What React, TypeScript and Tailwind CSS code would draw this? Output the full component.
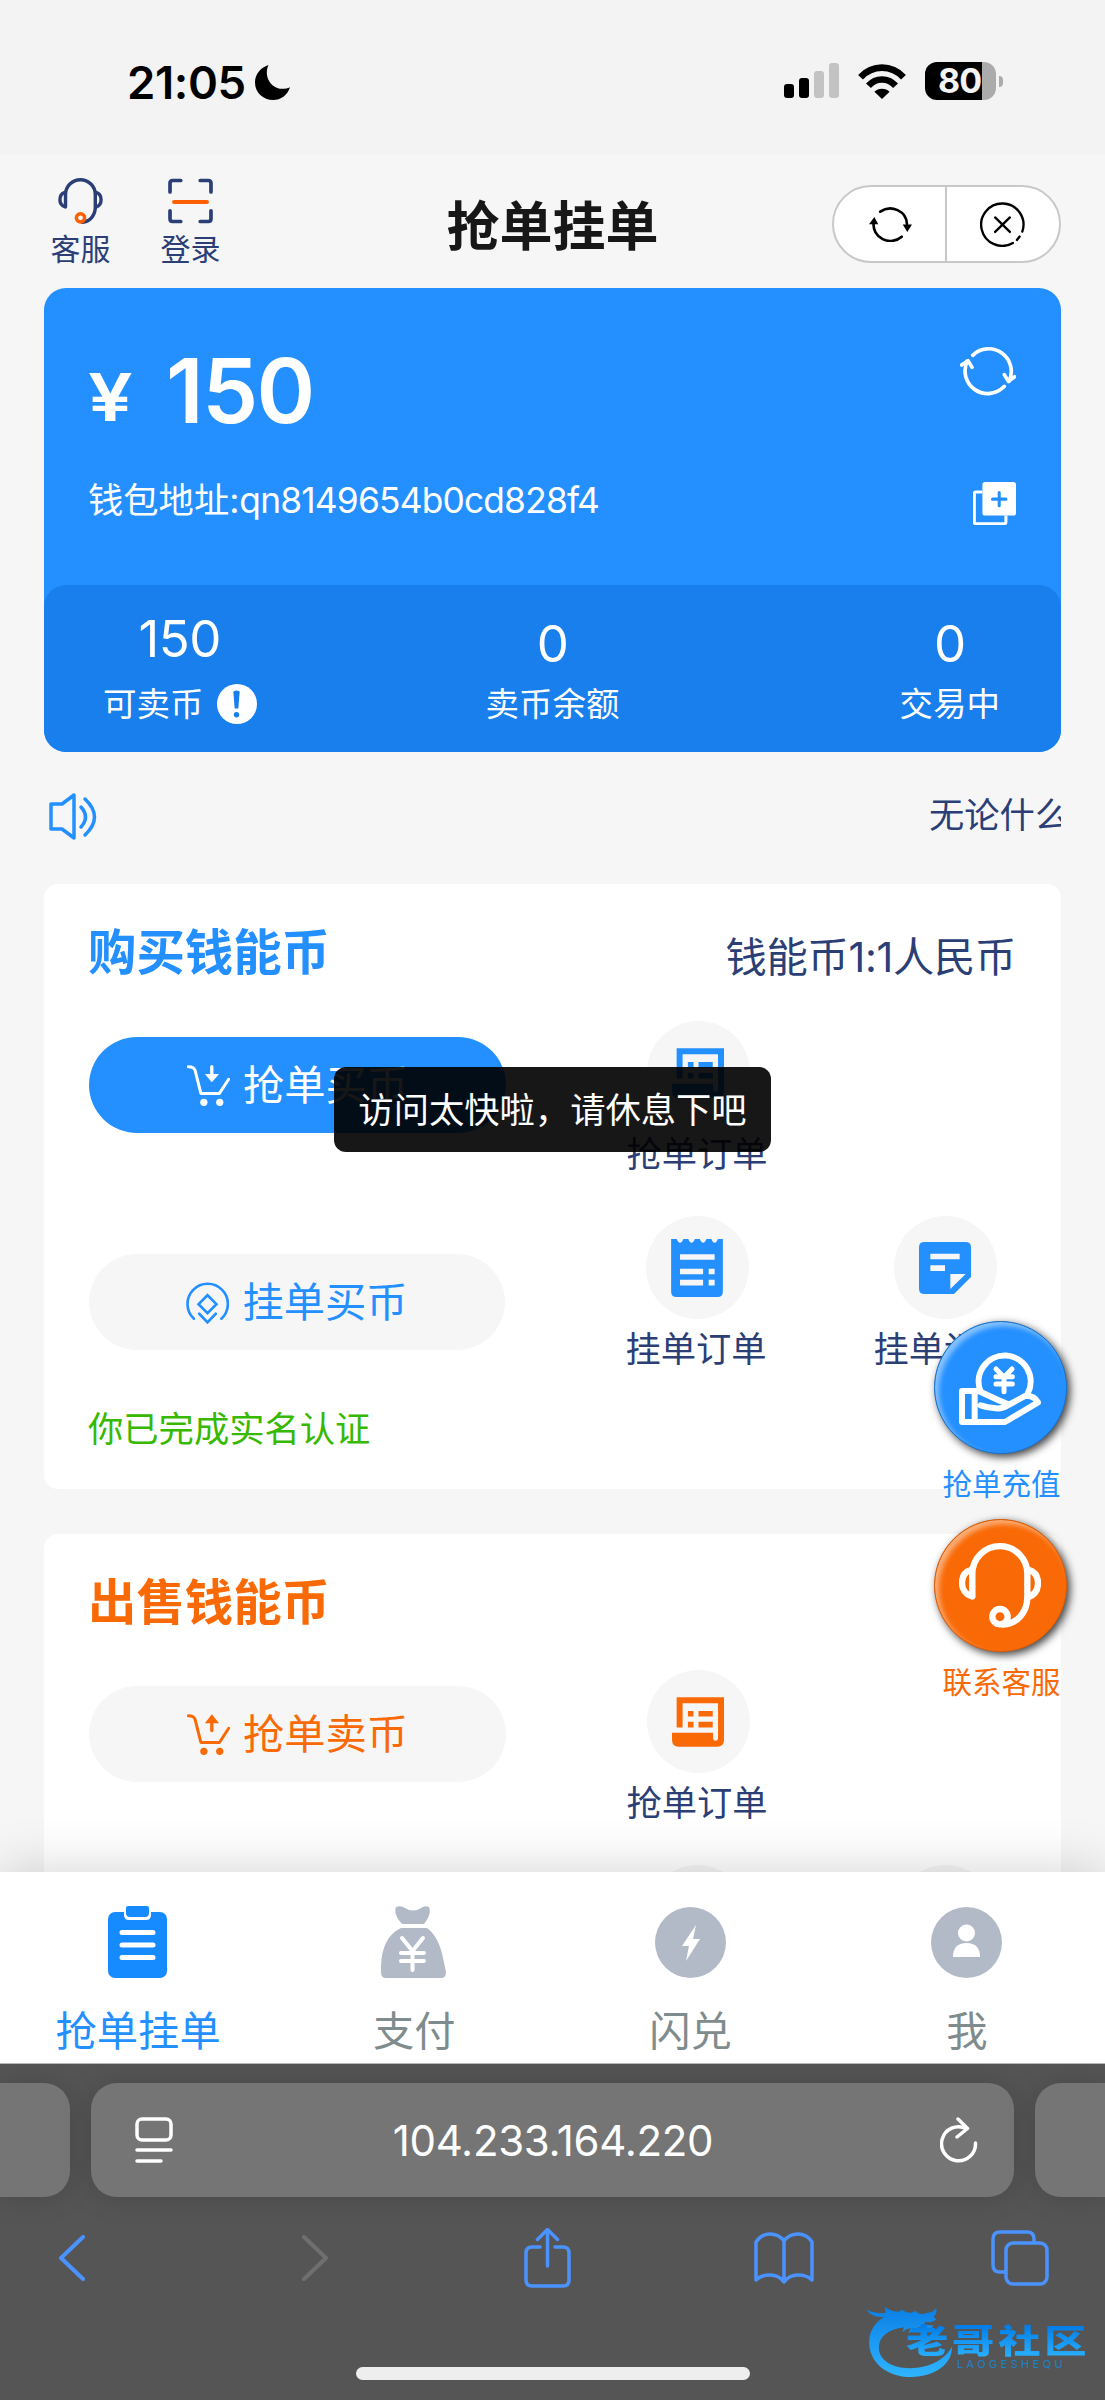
import type { FC, ReactNode } from "react";
import clsx from "clsx";

type IconProps = { className?: string };

const HeadsetIcon: FC<IconProps & { micClassName?: string }> = ({ className, micClassName }) => (
  <svg viewBox="0 0 246 255" fill="none" stroke="currentColor" strokeWidth={19} strokeLinecap="round" className={className}>
    <path d="M40 160V92a82 82 0 0 1 165 0v70c0 45-30 80-72 83" />
    <path d="M36 80C16 86 9 102 9 120s10 34 30 40" />
    <path d="M209 80c20 6 28 22 28 40s-8 34-28 42" />
    <circle cx={123} cy={221} r={23} className={micClassName} />
  </svg>
);

const ScanIcon: FC<IconProps> = ({ className }) => (
  <svg viewBox="0 0 134 134" fill="none" stroke="currentColor" strokeWidth={11} strokeLinecap="round" className={className}>
    <path d="M6 40V14q0-8 8-8h24M96 6h24q8 0 8 8v26M128 96v24q0 8-8 8H96M38 128H14q-8 0-8-8V96" />
    <path d="M18 70h98" stroke="#ff5f00" strokeWidth={12} />
  </svg>
);

const ReloadIcon: FC<IconProps> = ({ className }) => (
  <svg viewBox="0 0 130 106" fill="none" stroke="currentColor" strokeWidth={8} strokeLinecap="round" className={className}>
    <path d="M34 14A51 49 0 0 1 115 52M99 90A51 49 0 0 1 14 48" />
    <path d="M0 52 16 30 28 52ZM102 53 116 76 130 53Z" fill="currentColor" stroke="none" />
  </svg>
);

const CloseIcon: FC<IconProps> = ({ className }) => (
  <svg viewBox="0 0 134 134" fill="none" stroke="currentColor" strokeWidth={7} strokeLinecap="round" className={className}>
    <path d="M126 88A63 63 0 1 0 98 122M110 113l8-10" />
    <path d="m45 46 44 43M89 46 45 89" />
  </svg>
);

const RefreshIcon: FC<IconProps> = ({ className }) => (
  <svg viewBox="0 0 168 148" fill="none" stroke="currentColor" strokeWidth={11} strokeLinecap="round" strokeLinejoin="round" className={className}>
    <path d="M38 27A68 68 0 0 1 147 105M133 120A68 68 0 0 1 22 44" />
    <path d="M5 56 24 43l12 20M133 85l12 20 19-14" />
  </svg>
);

const CopyPlusIcon: FC<IconProps> = ({ className }) => (
  <svg viewBox="0 0 128 128" fill="none" className={className}>
    <path d="M28 30H8q-4 0-4 4v86q0 4 4 4h86q4 0 4-4v-20" stroke="white" strokeWidth={9} />
    <rect x={28} width={100} height={100} rx={8} fill="white" />
    <path d="M78 31v40M58 51h40" stroke="#2490ff" strokeWidth={9} strokeLinecap="round" />
  </svg>
);

const SpeakerIcon: FC<IconProps> = ({ className }) => (
  <svg viewBox="0 0 48 47" fill="none" stroke="currentColor" strokeWidth={3.5} strokeLinecap="round" strokeLinejoin="round" className={className}>
    <path d="M2 11h11L25 2v43L13 36H2Z" />
    <path d="M32 14q9 10 0 20M36 6q19 18 0 36" />
  </svg>
);

const CartIcon: FC<IconProps & { up?: boolean }> = ({ className, up }) => (
  <svg viewBox="0 0 130 124" fill="none" stroke="currentColor" strokeWidth={9} strokeLinecap="round" strokeLinejoin="round" className={className}>
    <path d="M4 5q16 0 20 10l18 71h56l28-43" />
    <path d={up ? "M75 50V22" : "M75 5v26"} strokeWidth={10} />
    <path d={up ? "M54 28 75 1l22 27Z" : "M54 27h43L75 52Z"} fill="currentColor" stroke="none" />
    <circle cx={51} cy={113} r={11} fill="currentColor" stroke="none" />
    <circle cx={99} cy={113} r={11} fill="currentColor" stroke="none" />
  </svg>
);

const ListingIcon: FC<IconProps> = ({ className }) => (
  <svg viewBox="0 0 130 130" fill="none" stroke="currentColor" strokeWidth={8} strokeLinecap="round" className={className}>
    <path d="M24 114A61 61 0 1 1 107 114" />
    <path d="m65 43 27 27-27 27-27-27ZM40 99l25 26 25-26" />
  </svg>
);

const ScrollOrderIcon: FC<IconProps> = ({ className }) => (
  <svg viewBox="0 0 157 149" fill="currentColor" className={className}>
    <path d="M14 0H157V128Q157 149 136 149H20Q0 149 0 128V107H124V124Q125 131 131 131Q138 131 139 124V18H32V91H14Z" />
    <path d="M48 41h17v17H48zM80 41h43v17H80zM48 74h17v17H48zM80 74h43v17H80z" />
  </svg>
);

const ReceiptIcon: FC<IconProps> = ({ className }) => (
  <svg viewBox="0 0 157 176" fill="currentColor" className={className}>
    <path d="M0 0h17q4 11 10 11t10-11h15q4 11 10 11t10-11h15q4 11 10 11t10-11h15q4 11 10 11t10-11h15v160q0 16-16 16H16q-16 0-16-16Z" />
    <path d="M27 46h105v17H27zM27 90h70v17H27zM114 90h18v17h-18zM27 124h70v17H27zM114 124h18v17h-18z" fill="#f6f6f6" />
  </svg>
);

const NoteIcon: FC<IconProps> = ({ className }) => (
  <svg viewBox="0 0 156 156" fill="currentColor" className={className}>
    <path d="M16 0H140Q156 0 156 16V105L105 156H16Q0 156 0 140V16Q0 0 16 0Z" />
    <path d="M94 96h46l-46 45ZM34 35h88v17H34zM34 70h44v17H34z" fill="#f6f6f6" />
  </svg>
);

const HandCoinIcon: FC<IconProps> = ({ className }) => (
  <svg viewBox="0 0 246 222" fill="none" stroke="currentColor" strokeWidth={18} strokeLinecap="round" strokeLinejoin="round" className={className}>
    <path d="M65 122A78 78 0 1 1 206 128" />
    <path d="M9 120h50l58 27q18 8 30 12M9 120v93h129l99-59q-10-20-37-20l-52 28q-18 12-38 10-26-2-45-9M47 122v88" />
    <path d="m111 54 24 25 24-25M111 77h49M111 99h49M135 80v42" strokeWidth={15} />
  </svg>
);

const ClipboardIcon: FC<IconProps> = ({ className }) => (
  <svg viewBox="0 0 59 72" className={className}>
    <rect y={6} width={59} height={66} rx={7} fill="#168aff" />
    <path d="M16 4v5q0 5 5 5h17q5 0 5-5V4Z" fill="white" />
    <path d="M18 2q0-2 2-2h19q2 0 2 2v5q0 4-4 4H22q-4 0-4-4Z" fill="#168aff" />
    <path d="M14 26.500h31M14 39h31M14 51.500h31" stroke="white" strokeWidth={5} strokeLinecap="round" />
  </svg>
);

const MoneyBagIcon: FC<IconProps> = ({ className }) => (
  <svg viewBox="0 0 65 72" fill="#b2b9c7" className={className}>
    <path d="M15 1q5-2 9 1 8 5 16 0 4-3 8-1 3 7-5 17H21Q12 8 15 1Z" />
    <path d="M20 22h26q12 9 16 30l3 14q0 6-5 6H5q-5 0-5-6Q-1 32 20 22Z" />
    <path d="m21 32 10.500 13L42 32M20 47h23M20 55h23M31.500 46v18" fill="none" stroke="white" strokeWidth={4} strokeLinecap="round" />
  </svg>
);

const FlashIcon: FC<IconProps> = ({ className }) => (
  <svg viewBox="0 0 71 71" className={className}>
    <circle cx={35.5} cy={35.5} r={35.5} fill="#b2b9c7" />
    <path d="M41 18 27 39h7l-3 15 14-22h-7Z" fill="white" />
  </svg>
);

const ProfileIcon: FC<IconProps> = ({ className }) => (
  <svg viewBox="0 0 71 71" className={className}>
    <circle cx={35.5} cy={35.5} r={35.5} fill="#b2b9c7" />
    <circle cx={35.5} cy={26} r={8.5} fill="white" />
    <path d="M22 50q0-14 13.500-14T49 50Z" fill="white" />
  </svg>
);

const WatermarkDragon: FC<IconProps> = ({ className }) => (
  <svg viewBox="0 0 92 76" className={className}>
    <defs>
      <linearGradient id="dragon" x1="0" y1="0" x2="0" y2="1">
        <stop offset="0" stopColor="#0a7fe6" />
        <stop offset="1" stopColor="#2fb4ff" />
      </linearGradient>
    </defs>
    <path
      fill="url(#dragon)"
      d="M0 6q10 5 20 3l-1-6q8 5 14 5l4-2q3 3 9 3l5-2q2 4 8 3l9-2 4-4q1 6-3 9l3 3q-6 4-11 2l-2 3 10 1q-2 5-8 3l-7-1q-5 4-11 6l3-5q-4 0-9 4l2-5C22 26 13 34 13 45c0 13 14 21 32 21 20 0 36-9 43-22 1 17-17 31-42 31C21 75 3 60 3 39c0-12 7-21 16-26Q7 15 0 6Z"
    />
  </svg>
);

const StatusBar = () => (
  <div className="flex h-[155px] items-start justify-between bg-[#f3f3f3] pl-[127px] pr-[102px] pt-[59px] text-black">
    <div className="flex h-[46px] items-center gap-[9px]">
      <span className="pt-px text-[45.500px] font-semibold leading-none tracking-[-0.400px]">21:05</span>
      <svg viewBox="0 0 104 104" className="h-[35px] w-[35px]" fill="currentColor">
        <path d="M40 0C30 22 36 46 52 60c14 12 34 14 52 6C96 90 77 104 54 104 24 104 0 82 0 52 0 28 16 8 40 0Z" />
      </svg>
    </div>
    <div className="mt-[3px] flex h-[38px] items-center">
      <svg viewBox="0 0 56 36" className="h-9 w-14" fill="#c3c3c3">
        <rect x={0} y={21} width={10} height={14} rx={3} fill="black" />
        <rect x={15} y={15} width={10} height={20} rx={3} fill="black" />
        <rect x={30} y={8} width={10} height={27} rx={3} />
        <rect x={45} y={0} width={10} height={35} rx={3} />
      </svg>
      <svg viewBox="0 0 144 106" className="ml-[18px] h-[35px] w-12" fill="none" stroke="black" strokeWidth={20}>
        <path d="M7 40Q34 11 72 11T137 40" />
        <path d="M31 66Q48 47 72 47T113 66" />
        <path d="M72 106 49 84Q58 75 72 75T95 84Z" fill="black" stroke="none" />
      </svg>
      <div className="ml-[19px] flex h-[38px] w-[71px] items-center rounded-[12px] bg-[linear-gradient(90deg,#000_57px,#ababab_57px)] pl-[13px]">
        <span className="text-[34px] font-bold leading-[38px] tracking-[-1px] text-[#f3f3f3]">80</span>
      </div>
      <div className="ml-[3px] h-[11px] w-1 rounded-r-full bg-[#ababab]" />
    </div>
  </div>
);

const Header = () => (
  <header className="grid h-[133px] grid-cols-[1fr_auto_1fr] items-start px-11">
    <div className="flex gap-[49px] pl-[6px] pt-[23px] text-[#2b3f76]">
      <div className="flex w-[61px] flex-col items-center gap-[10px]">
        <HeadsetIcon className="h-[46px] w-[45px]" micClassName="stroke-[#ff5f00]" />
        <span className="text-[30px] leading-none">客服</span>
      </div>
      <div className="flex w-[61px] flex-col items-center gap-[10px]">
        <ScanIcon className="h-[46px] w-[45px]" />
        <span className="text-[30px] leading-none">登录</span>
      </div>
    </div>
    <h1 className="pt-[46px] text-[53px] font-bold leading-none text-[#171717]">抢单挂单</h1>
    <div className="mt-[30px] grid h-[78px] w-[229px] grid-cols-2 justify-self-end rounded-full border-2 border-[#c8c8c8] bg-white text-black">
      <div className="flex items-center justify-center border-r-2 border-[#c8c8c8]">
        <ReloadIcon className="ml-[2px] h-[35px] w-[43px]" />
      </div>
      <div className="flex items-center justify-center">
        <CloseIcon className="h-[45px] w-[45px]" />
      </div>
    </div>
  </header>
);

const Stat = ({ value, label, className }: { value: string; label: ReactNode; className?: string }) => (
  <div className={clsx("flex flex-col items-center", className)}>
    <span className="text-[51px] leading-none tracking-[-0.5px]">{value}</span>
    <span className="flex h-10 items-center text-[33.500px] leading-none">{label}</span>
  </div>
);

const WalletCard = () => (
  <section className="mx-11 flex h-[464px] flex-col justify-between rounded-[22px] bg-[#2490ff] text-white">
    <div className="flex justify-between pl-11 pr-[45px] pt-[58px]">
      <div>
        <div className="flex items-baseline pt-px">
          <span className="w-[78px] pb-[2px]">
            <span className="mb-[2px] inline-block origin-left -translate-y-[2px] scale-x-[1.200] text-[66px] font-semibold leading-[88px]">¥</span>
          </span>
          <span className="text-[89px] font-semibold leading-[88px] tracking-[-1.500px]">150</span>
        </div>
        <p className="mt-[36px] text-[35.300px] leading-none">
          钱包地址:<span className="tracking-[-0.800px]">qn8149654b0cd828f4</span>
        </p>
      </div>
      <div className="flex flex-col items-end">
        <RefreshIcon className="h-[50px] w-14" />
        <CopyPlusIcon className="mt-[86px] h-[43px] w-[43px]" />
      </div>
    </div>
    <div className="grid h-[167px] grid-cols-3 rounded-[22px] bg-[#187fec] px-[59px] pt-[28px]">
      <Stat
        value="150"
        className="gap-[20px] justify-self-start"
        label={
          <>
            <span className="mt-px">可卖币</span>
            <i className="ml-[13px] flex h-10 w-10 items-center justify-center rounded-full bg-white">
              <svg viewBox="0 0 10 30" className="h-[28px] w-[9px]" fill="#187fec">
                <path d="M1.500 2q0-2 3.500-2t3.500 2L7 20H3Z" />
                <circle cx={5} cy={27} r={3} />
              </svg>
            </i>
          </>
        }
      />
      <Stat value="0" label="卖币余额" className="gap-[16px] pt-[5px]" />
      <Stat value="0" label="交易中" className="mr-[2px] gap-[16px] justify-self-end pt-[5px]" />
    </div>
  </section>
);

const Notice = () => (
  <div className="flex h-[132px] items-start justify-between overflow-hidden pl-[49px] pr-11 pt-[41px]">
    <SpeakerIcon className="h-[47px] w-12 text-[#2490ff]" />
    <div className="mt-[5px] w-[132px] overflow-hidden whitespace-nowrap text-[35.300px] leading-[36px] text-[#2b3f76]">
      无论什么时候
    </div>
  </div>
);

const ActionButton = ({ icon, label, className }: { icon: ReactNode; label: string; className?: string }) => (
  <button className={clsx("flex h-24 w-[417px] items-center justify-center gap-[13px] rounded-full text-[41.300px] leading-none", className)}>
    {icon}
    <span className="mt-[2px]">{label}</span>
  </button>
);

const OrderLink = ({ icon, label, className }: { icon?: ReactNode; label?: string; className?: string }) => (
  <div className={clsx("flex w-[142px] flex-col items-center", className)}>
    <div className="flex h-[103px] w-[103px] items-center justify-center rounded-full bg-[#f6f6f6]">{icon}</div>
    <span className="mt-[13px] whitespace-nowrap pr-[2px] text-[35.300px] leading-none text-[#2b3f76]">{label}</span>
  </div>
);

const BuyCard = () => (
  <section className="mx-11 h-[605px] rounded-[14px] bg-white px-[45px] pt-[45px]">
    <div className="flex h-12 items-center justify-between">
      <h2 className="-ml-px text-[48.400px] font-bold leading-none text-[#2490ff]">购买钱能币</h2>
      <span className="mt-[10px] text-[41.300px] leading-none tracking-[-0.3px] text-[#2b3f76]">钱能币1:1人民币</span>
    </div>
    <div className="mt-11 flex h-[195px] items-start">
      <ActionButton icon={<CartIcon className="h-[41px] w-[43px]" />} label="抢单买币" className="mt-4 bg-[#2490ff] text-white" />
      <OrderLink icon={<ScrollOrderIcon className="h-[50px] w-[52px] text-[#2490ff]" />} label="抢单订单" className="ml-[121px]" />
    </div>
    <div className="flex h-[195px] items-start">
      <ActionButton icon={<ListingIcon className="h-[43px] w-[43px]" />} label="挂单买币" className="mt-[38px] bg-[#f6f6f6] text-[#2490ff]" />
      <OrderLink icon={<ReceiptIcon className="h-[58px] w-[52px] text-[#2490ff]" />} label="挂单订单" className="ml-[121px]" />
      <OrderLink icon={<NoteIcon className="h-[52px] w-[52px] text-[#2490ff]" />} label="挂单记录" className="ml-[106px]" />
    </div>
    <p className="-ml-px text-[35.300px] leading-[38px] text-[#36b900]">你已完成实名认证</p>
  </section>
);

const SellCard = () => (
  <section className="mx-11 mt-[45px] h-[605px] rounded-[14px] bg-white px-[45px] pt-[45px]">
    <h2 className="-ml-px text-[48.400px] font-bold leading-[48px] text-[#f96a07]">出售钱能币</h2>
    <div className="mt-[43px] flex h-[195px] items-start">
      <ActionButton icon={<CartIcon up className="h-[43px] w-[43px]" />} label="抢单卖币" className="mt-4 bg-[#f6f6f6] text-[#f96a07]" />
      <OrderLink icon={<ScrollOrderIcon className="h-[50px] w-[52px] text-[#f96a07]" />} label="抢单订单" className="ml-[121px]" />
    </div>
    <div className="flex">
      <OrderLink className="ml-[538px]" />
      <OrderLink className="ml-[106px]" />
    </div>
  </section>
);

const FloatingButton = ({ label, icon, className, textClass }: { label: string; icon: ReactNode; className: string; textClass: string }) => (
  <div className="flex h-[198px] flex-col items-center">
    <div
      className={clsx(
        "flex h-[133px] w-[133px] items-center justify-center rounded-full border text-white shadow-[3px_3px_8px_rgba(0,0,0,0.75),inset_4px_4px_5px_rgba(255,255,255,0.45)]",
        className,
      )}
    >
      {icon}
    </div>
    <span className={clsx("mt-4 whitespace-nowrap pl-[2px] text-[29.500px] leading-none", textClass)}>{label}</span>
  </div>
);

const tabs = [
  { label: "抢单挂单", icon: <ClipboardIcon className="h-[72px] w-[59px]" />, active: true },
  { label: "支付", icon: <MoneyBagIcon className="h-[72px] w-[65px]" /> },
  { label: "闪兑", icon: <FlashIcon className="h-[71px] w-[71px]" /> },
  { label: "我", icon: <ProfileIcon className="h-[71px] w-[71px]" /> },
];

const TabBar = () => (
  <nav className="relative grid h-[191px] grid-cols-4 bg-white shadow-[0_0_50px_rgba(0,0,0,0.18)]">
    {tabs.map((tab) => (
      <div key={tab.label} className="flex flex-col items-center pt-[34px]">
        <div className="flex h-[72px] items-center pr-px">{tab.icon}</div>
        <span className={clsx("mt-[33px] text-[41.300px] leading-none", tab.active ? "text-[#2490ff]" : "text-[#7f8c8d]")}>
          {tab.label}
        </span>
      </div>
    ))}
  </nav>
);

const BrowserBar = () => (
  <footer className="relative z-10 h-[337px] overflow-hidden border-t border-[#b4b4b4] bg-[#555]">
    <div className="mt-[19px] flex h-[114px] justify-between">
      <div className="w-[70px] rounded-r-[26px] bg-[#757575] shadow-[0_0_30px_rgba(0,0,0,0.16)]" />
      <div className="flex w-[923px] items-center justify-between rounded-[26px] bg-[#757575] pl-11 pr-[36px] text-white shadow-[0_0_30px_rgba(0,0,0,0.16)]">
        <svg viewBox="0 0 38 46" className="h-[46px] w-[38px]" fill="none" stroke="currentColor" strokeWidth={3.5} strokeLinecap="round">
          <rect x={2} y={2} width={34} height={21} rx={5} />
          <path d="M2 33h34M2 44h24" />
        </svg>
        <span className="pr-[7px] pt-[2px] text-[42px] leading-none tracking-[-0.3px]">104.233.164.220</span>
        <svg viewBox="0 0 38 46" className="h-[46px] w-[38px]" fill="none" stroke="currentColor" strokeWidth={3.5} strokeLinecap="round" strokeLinejoin="round">
          <path d="M26 11.500A17 17 0 1 0 35.500 26" />
          <path d="m18 2 9.500 9.500L17 20" />
        </svg>
      </div>
      <div className="w-[70px] rounded-l-[26px] bg-[#757575] shadow-[0_0_30px_rgba(0,0,0,0.16)]" />
    </div>
    <div className="mt-[30px] flex h-[62px] items-center pl-[58px] text-[#4a92ff]">
      <svg viewBox="0 0 28 46" className="h-[46px] w-7" fill="none" stroke="currentColor" strokeWidth={4} strokeLinecap="round" strokeLinejoin="round">
        <path d="M25 2 3 23l22 21" />
      </svg>
      <svg viewBox="0 0 28 46" className="ml-[215px] h-[46px] w-7 text-[#6f6f6f]" fill="none" stroke="currentColor" strokeWidth={4} strokeLinecap="round" strokeLinejoin="round">
        <path d="m3 2 22 21L3 44" />
      </svg>
      <svg viewBox="0 0 47 60" className="ml-[195px] h-[60px] w-[47px]" fill="none" stroke="currentColor" strokeWidth={3.5} strokeLinecap="round" strokeLinejoin="round">
        <path d="M16 19H8q-6 0-6 6v27q0 6 6 6h31q6 0 6-6V25q0-6-6-6h-8M23.500 38V2M13.500 11.500l10-10 10 10" />
      </svg>
      <svg viewBox="0 0 60 52" className="ml-[183px] h-[52px] w-[60px]" fill="none" stroke="currentColor" strokeWidth={3.5} strokeLinejoin="round" strokeLinecap="round">
        <path d="M30 9Q25 2 16 2T2 10v38q5-5 14-5t14 7q5-7 14-7t14 5V10Q53 2 44 2T30 9Zm0 0v41" />
      </svg>
      <svg viewBox="0 0 58 56" className="ml-[177px] h-14 w-[58px]" fill="none" stroke="currentColor" strokeWidth={3.5}>
        <path d="M14 42H9q-7 0-7-7V9q0-7 7-7h27q7 0 7 7v4" />
        <rect x={15} y={13} width={41} height={41} rx={7} />
      </svg>
    </div>
    <div className="mx-auto mt-[78px] h-[13px] w-[394px] rounded-full bg-[#eee]" />
    <div className="absolute left-[866px] top-[240px] h-[76px] w-[230px]">
      <WatermarkDragon className="h-[74px] w-[90px]" />
      <div className="absolute left-[40px] top-[18px] flex origin-left scale-x-[1.280] gap-[3px] bg-linear-to-b from-[#0077e6] to-[#2db4ff] bg-clip-text text-[33px] font-black leading-[38px] text-transparent">
        <span>老</span>
        <span>哥</span>
        <span>社</span>
        <span>区</span>
      </div>
      <span className="absolute left-[91px] top-[55px] text-[11px] leading-none tracking-[3.400px] text-[#1f80c8]">LAOGESHEQU</span>
    </div>
  </footer>
);

export default function App() {
  return (
    <div className="relative flex h-[2400px] w-[1105px] flex-col overflow-hidden bg-[#f6f6f6] font-[Inter,'Noto_Sans_CJK_SC',sans-serif]">
      <StatusBar />
      <main className="h-[1717px] overflow-hidden">
        <Header />
        <WalletCard />
        <Notice />
        <BuyCard />
        <SellCard />
      </main>
      <TabBar />
      <BrowserBar />

      <div className="absolute left-[934px] top-[1321px]">
        <FloatingButton
          label="抢单充值"
          icon={<HandCoinIcon className="mr-px h-[74px] w-[82px]" />}
          className="border-[#1c70c8] bg-[#2490ff]"
          textClass="text-[#2490ff]"
        />
        <FloatingButton
          label="联系客服"
          icon={<HeadsetIcon className="mr-px h-[85px] w-[82px]" />}
          className="border-[#d85c08] bg-[#f96a07]"
          textClass="text-[#f96a07]"
        />
      </div>

      <div className="absolute left-[334px] top-[1067px] flex h-[85px] w-[437px] items-center justify-center whitespace-nowrap rounded-[12px] bg-black/[0.91] pt-[2px] text-[35.300px] leading-none text-white">
        访问太快啦，请休息下吧
      </div>
    </div>
  );
}
